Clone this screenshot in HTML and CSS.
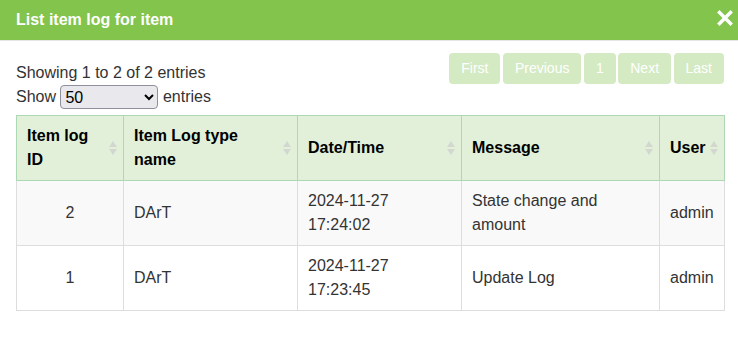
FILE: index.html
```html
<!DOCTYPE html>
<html>
<head>
<meta charset="utf-8">
<link rel="stylesheet" href="styles.css">
</head>
<body>
<div class="modal">
  <div class="modal-header">
    <span class="modal-title">List item log for item</span>
    <span class="close" aria-label="Close">
      <svg width="16" height="16" viewBox="0 0 16 16"><path d="M2.5 2.5 L13.5 13.5 M13.5 2.5 L2.5 13.5" stroke="#fff" stroke-width="3.4" stroke-linecap="square"/></svg>
    </span>
  </div>
  <div class="modal-body">
    <div class="toolbar">
      <div class="info">
        <div>Showing 1 to 2 of 2 entries</div>
        <div class="length">Show <select class="length-select"><option>50</option></select> entries</div>
      </div>
      <div class="pager">
        <span class="page-btn">First</span>
        <span class="page-btn">Previous</span>
        <span class="page-btn">1</span>
        <span class="page-btn">Next</span>
        <span class="page-btn">Last</span>
      </div>
    </div>
    <table class="log-table">
      <colgroup>
        <col class="c1"><col class="c2"><col class="c3"><col class="c4"><col class="c5">
      </colgroup>
      <thead>
        <tr>
          <th>Item log ID<svg class="sort" width="8" height="14" viewBox="0 0 8 14"><path d="M0 6 L4 0 L8 6 Z M0 8 L8 8 L4 14 Z"/></svg></th>
          <th>Item Log type name<svg class="sort" width="8" height="14" viewBox="0 0 8 14"><path d="M0 6 L4 0 L8 6 Z M0 8 L8 8 L4 14 Z"/></svg></th>
          <th>Date/Time<svg class="sort" width="8" height="14" viewBox="0 0 8 14"><path d="M0 6 L4 0 L8 6 Z M0 8 L8 8 L4 14 Z"/></svg></th>
          <th>Message<svg class="sort" width="8" height="14" viewBox="0 0 8 14"><path d="M0 6 L4 0 L8 6 Z M0 8 L8 8 L4 14 Z"/></svg></th>
          <th>User<svg class="sort" width="8" height="14" viewBox="0 0 8 14"><path d="M0 6 L4 0 L8 6 Z M0 8 L8 8 L4 14 Z"/></svg></th>
        </tr>
      </thead>
      <tbody>
        <tr class="odd">
          <td class="center">2</td>
          <td>DArT</td>
          <td>2024-11-27<br>17:24:02</td>
          <td>State change and amount</td>
          <td>admin</td>
        </tr>
        <tr>
          <td class="center">1</td>
          <td>DArT</td>
          <td>2024-11-27<br>17:23:45</td>
          <td>Update Log</td>
          <td>admin</td>
        </tr>
      </tbody>
    </table>
  </div>
</div>
</body>
</html>
```
FILE: styles.css
```css
html, body {
  margin: 0;
  padding: 0;
  background: #fff;
}
body {
  font-family: "Liberation Sans", Arial, sans-serif;
  font-size: 16px;
  color: #333;
}
.modal-header {
  height: 40px;
  background: #82c44c;
  border-bottom: 1px solid #e6e6e6;
  display: flex;
  align-items: center;
  justify-content: space-between;
  padding: 0 5px 0 16px;
}
.modal-title {
  color: #fff;
  font-weight: bold;
  font-size: 16px;
  line-height: 20px;
  margin-top: 0;
}
.close {
  display: flex;
  width: 16px;
  height: 16px;
  margin-top: -4px;
}
.modal-body {
  padding: 12px 14px 0 16px;
}
.toolbar {
  display: flex;
  justify-content: space-between;
  align-items: flex-start;
}
.info {
  padding-top: 8px;
  line-height: 24px;
}
.length {
  height: 24px;
  display: flex;
  align-items: center;
  white-space: pre;
}
.length-select {
  width: 98px;
  height: 24px;
  font-family: "Liberation Sans", Arial, sans-serif;
  font-size: 16px;
  color: #000;
  margin: 0;
  background-color: #e9e9ed;
  border: 1px solid #8f8f9d;
  border-radius: 4px;
}
.pager {
  display: flex;
  gap: 2.5px;
}
.page-btn {
  display: block;
  height: 31px;
  line-height: 31px;
  padding: 0 12px;
  font-size: 14px;
  color: #fff;
  background: #d4eac3;
  border-radius: 4px;
}
.log-table {
  margin-top: 6px;
  width: 708px;
  table-layout: fixed;
  border-collapse: collapse;
}
.c1 { width: 107px; }
.c2 { width: 174px; }
.c3 { width: 164px; }
.c4 { width: 198px; }
.c5 { width: 65px; }
.log-table th {
  position: relative;
  background: #e2f0d9;
  border: 1px solid #acd9b3;
  color: #000;
  font-weight: bold;
  text-align: left;
  padding: 8px 28px 8px 10px;
  line-height: 24px;
  height: 48px;
  vertical-align: middle;
  white-space: normal;
}
.log-table th:last-child {
  white-space: nowrap;
}
.sort {
  position: absolute;
  right: 6px;
  top: 50%;
  margin-top: -7px;
  fill: #d2d8cf;
}
.log-table td {
  border: 1px solid #dddddd;
  padding: 8px 10px;
  line-height: 24px;
  height: 48px;
  vertical-align: middle;
}
.log-table tr.odd td {
  background: #f9f9f9;
}
.log-table td.center {
  text-align: center;
}
```
